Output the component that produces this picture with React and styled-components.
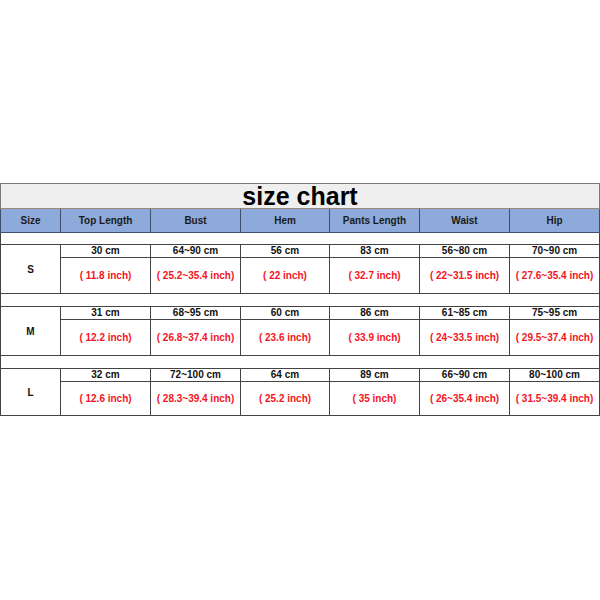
import React from "react";
import styled, { createGlobalStyle } from "styled-components";

const GlobalStyle = createGlobalStyle`
  html, body {
    margin: 0;
    padding: 0;
    background: #ffffff;
  }
  body {
    font-family: "Liberation Sans", Arial, sans-serif;
  }
`;

const Page = styled.div`
  width: 600px;
  height: 600px;
  padding-top: 183px;
  box-sizing: border-box;
`;

const Table = styled.table`
  width: 599px;
  border-collapse: collapse;
  table-layout: fixed;
  font-family: "Liberation Sans", Arial, sans-serif;
`;

const TitleCell = styled.td`
  height: 24px;
  padding: 0;
  background: #efefef;
  border: 1px solid #7a7a7a;
  border-bottom: 1px solid #9c8a78;
  text-align: center;
  font-size: 25px;
  font-weight: bold;
  line-height: 24px;
  color: #000;
`;

const TH = styled.th`
  height: 23px;
  padding: 0;
  background: #8eaadb;
  border: 1px solid #3f4f72;
  border-top: 1px solid #9c8a78;
  font-size: 10px;
  font-weight: bold;
  color: #1a1a1a;
  text-align: center;
`;

const Spacer = styled.td`
  height: ${(p) => (p.$first ? "11px" : "12px")};
  padding: 0;
  border: 1px solid #444;
  background: #fff;
`;

const SizeCell = styled.td`
  padding: 0;
  border: 1px solid #444;
  text-align: center;
  vertical-align: middle;
  font-size: 10px;
  font-weight: bold;
  color: #111;
`;

const Value = styled.td`
  height: ${(p) => (p.$inch ? (p.$short ? "33px" : "35px") : "12px")};
  padding: 0;
  border: 1px solid #444;
  text-align: center;
  vertical-align: middle;
  font-size: 10px;
  font-weight: bold;
  line-height: 12px;
  color: ${(p) => (p.$inch ? "#f5141e" : "#111")};
`;

const widths = [60, 90, 90, 89, 90, 90, 90];

const headers = ["Size", "Top Length", "Bust", "Hem", "Pants Length", "Waist", "Hip"];

const rows = [
  {
    size: "S",
    cm: ["30 cm", "64~90 cm", "56 cm", "83 cm", "56~80 cm", "70~90 cm"],
    inch: ["( 11.8 inch)", "( 25.2~35.4 inch)", "( 22 inch)", "( 32.7 inch)", "( 22~31.5 inch)", "( 27.6~35.4 inch)"],
  },
  {
    size: "M",
    cm: ["31 cm", "68~95 cm", "60 cm", "86 cm", "61~85 cm", "75~95 cm"],
    inch: ["( 12.2 inch)", "( 26.8~37.4 inch)", "( 23.6 inch)", "( 33.9 inch)", "( 24~33.5 inch)", "( 29.5~37.4 inch)"],
  },
  {
    size: "L",
    cm: ["32 cm", "72~100 cm", "64 cm", "89 cm", "66~90 cm", "80~100 cm"],
    inch: ["( 12.6 inch)", "( 28.3~39.4 inch)", "( 25.2 inch)", "( 35 inch)", "( 26~35.4 inch)", "( 31.5~39.4 inch)"],
  },
];

const SizeBlock = ({ row, first, last }) => (
  <>
    <tr>
      <Spacer colSpan={7} $first={first} />
    </tr>
    <tr>
      <SizeCell rowSpan={2}>{row.size}</SizeCell>
      {row.cm.map((v, i) => (
        <Value key={i}>{v}</Value>
      ))}
    </tr>
    <tr>
      {row.inch.map((v, i) => (
        <Value key={i} $inch $short={last}>
          {v}
        </Value>
      ))}
    </tr>
  </>
);

const App = () => (
  <Page>
    <GlobalStyle />
    <Table>
      <colgroup>
        {widths.map((w, i) => (
          <col key={i} style={{ width: w }} />
        ))}
      </colgroup>
      <tbody>
        <tr>
          <TitleCell colSpan={7}>size chart</TitleCell>
        </tr>
        <tr>
          {headers.map((h) => (
            <TH key={h}>{h}</TH>
          ))}
        </tr>
        {rows.map((r, i) => (
          <SizeBlock
            key={r.size}
            row={r}
            first={i === 0}
            last={i === rows.length - 1}
          />
        ))}
      </tbody>
    </Table>
  </Page>
);

export default App;
